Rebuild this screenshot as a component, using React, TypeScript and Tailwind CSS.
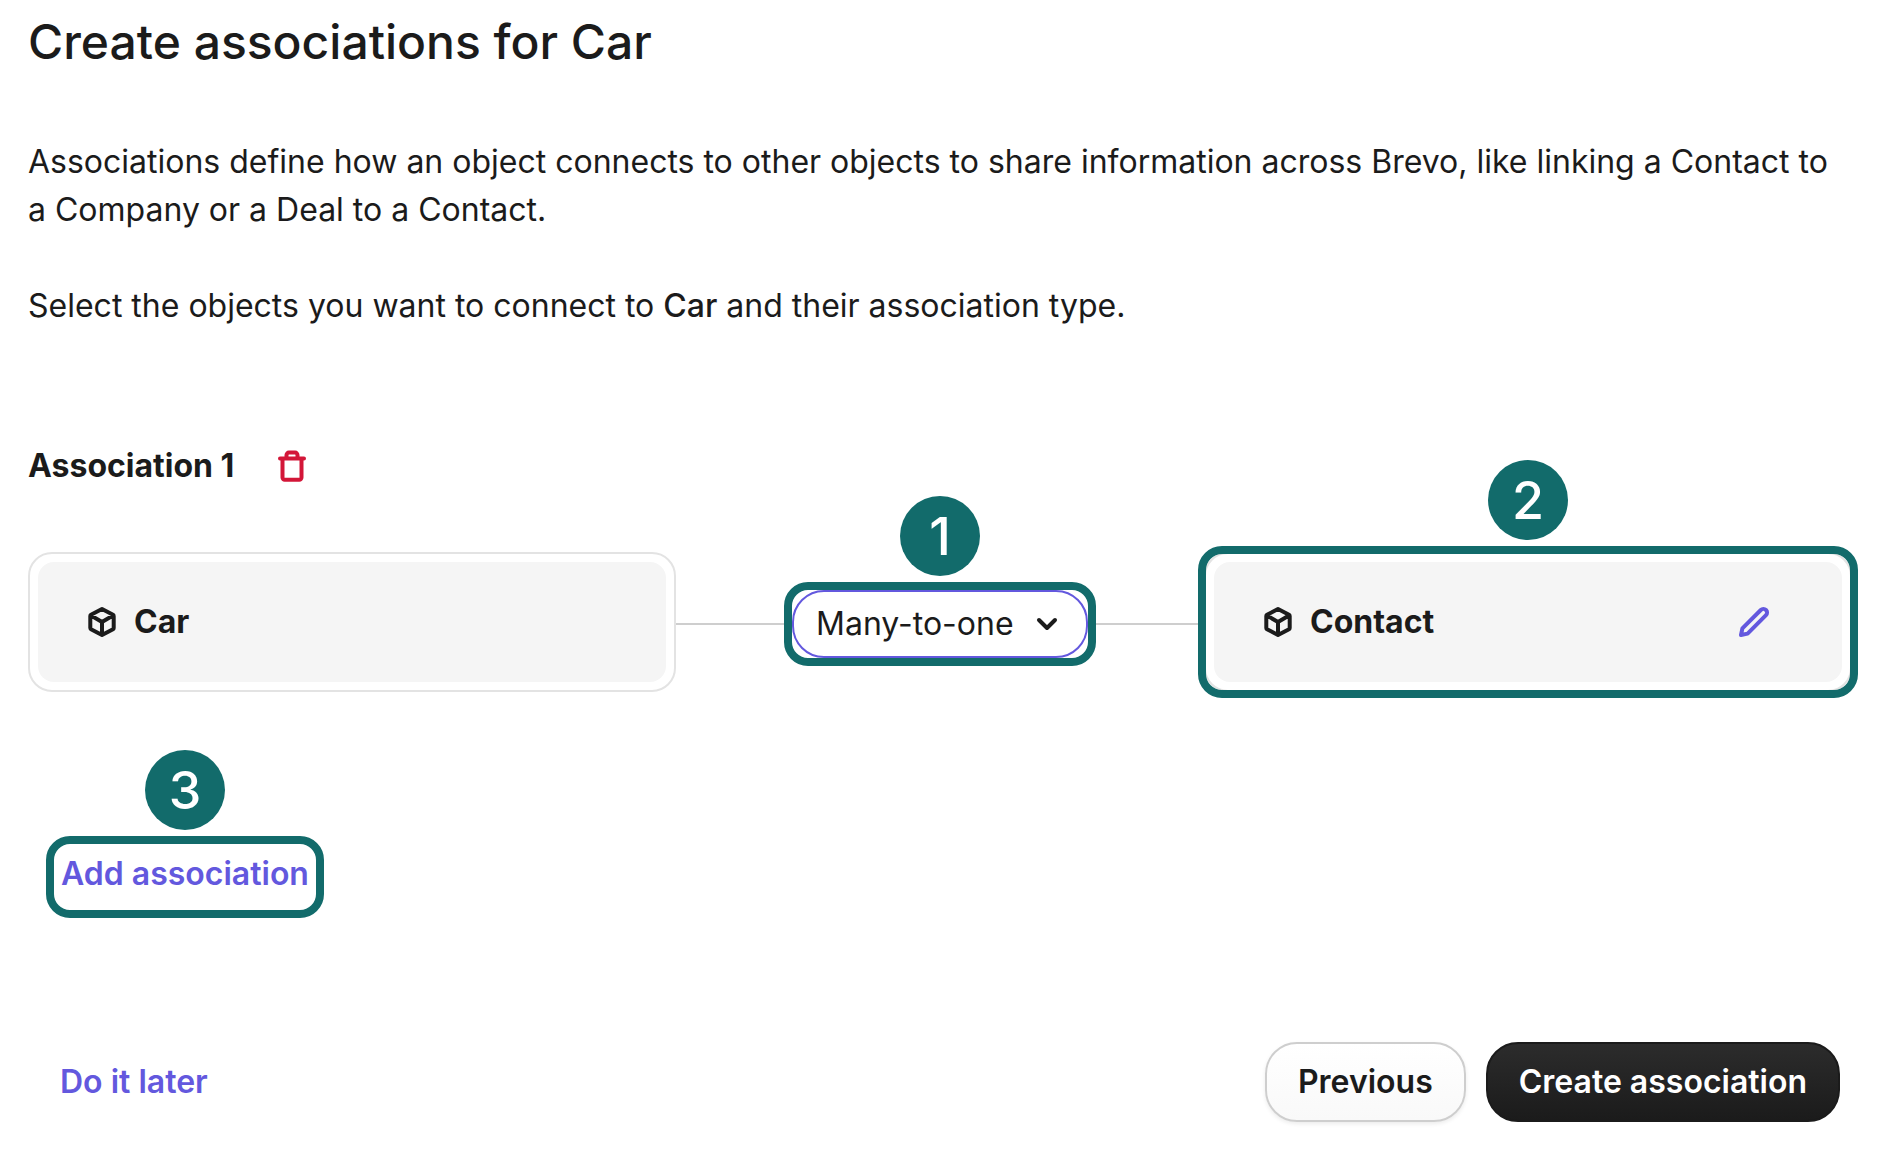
import { useState } from "react";
import type { ReactNode } from "react";

const ASSOCIATION_TYPES = ["One-to-one", "One-to-many", "Many-to-one", "Many-to-many"];

export default function App() {
  const [type, setType] = useState("Many-to-one");

  return (
    <main className="px-7 pt-3.5 pb-7 bg-white text-[#1b1b1b] text-[32px] leading-12 font-['Inter',sans-serif]">
      <h1 className="text-[48px] leading-14 font-medium">Create associations for Car</h1>

      <p className="mt-[68px]">
        Associations define how an object connects to other objects to share information across Brevo, like linking a
        Contact to a Company or a Deal to a Contact.
      </p>
      <p className="mt-12">
        Select the objects you want to connect to <span className="font-medium">Car</span> and their association type.
      </p>

      {/* Association */}
      <section className="mt-28">
        <div className="flex items-center gap-[42px]">
          <h2 className="font-bold">Association 1</h2>
          <button type="button" aria-label="Delete association" className="text-[#d31638]">
            <TrashIcon />
          </button>
        </div>

        <div className="mt-[62px] grid grid-cols-[1fr_528px_1fr]">
          <ObjectCard name="Car" />

          <div className="flex items-center pt-1">
            <Connector />
            <div className="relative h-[84px] border-8 border-[#126b6b] rounded-3xl">
              <StepBadge step={1} />
              <select
                aria-label="Association type"
                value={type}
                onChange={(e) => setType(e.target.value)}
                className="block w-[296px] h-[68px] pl-[22px] appearance-none border-2 border-[#6358de] rounded-[32px] bg-white outline-none"
              >
                {ASSOCIATION_TYPES.map((t) => (
                  <option key={t}>{t}</option>
                ))}
              </select>
              <ChevronIcon />
            </div>
            <Connector />
          </div>

          <div className="relative">
            <ObjectCard name="Contact" editable />
            <div className="absolute -inset-1.5 border-8 border-[#126b6b] rounded-3xl pointer-events-none">
              <StepBadge step={2} />
            </div>
          </div>
        </div>
      </section>

      <div className="mt-36 ml-[18px] relative w-fit h-[82px] px-[7px] border-8 border-[#126b6b] rounded-3xl">
        <StepBadge step={3} />
        <button type="button" className="pt-1.5 font-semibold text-[#6358de]">
          Add association
        </button>
      </div>

      {/* Footer */}
      <footer className="mt-31 pl-8 pr-3 flex items-center justify-between">
        <button type="button" className="font-semibold text-[#6358de]">
          Do it later
        </button>
        <div className="flex gap-5 font-semibold">
          <button
            type="button"
            className="h-20 px-[31px] border-2 border-[#cecece] rounded-[32px] bg-linear-to-b from-white to-[#f9f9f9] shadow-[0_2px_4px_rgba(0,0,0,0.08)]"
          >
            Previous
          </button>
          <button
            type="button"
            className="h-20 px-[31px] border-2 border-[#1b1b1b] rounded-[32px] bg-linear-to-b from-[#2c2c2c] to-[#1b1b1b] text-white"
          >
            Create association
          </button>
        </div>
      </footer>
    </main>
  );
}

function ObjectCard({ name, editable }: { name: string; editable?: boolean }) {
  return (
    <div className="p-2 border-2 border-[#e3e3e3] rounded-3xl">
      <div className="h-30 pl-12 pr-18 flex items-center rounded-2xl bg-[#f5f5f5]">
        <CubeIcon />
        <span className="ml-4 font-bold">{name}</span>
        {editable && (
          <button type="button" aria-label={`Edit ${name}`} className="ml-auto text-[#6358de]">
            <PencilIcon />
          </button>
        )}
      </div>
    </div>
  );
}

function Connector() {
  return <div className="flex-1 h-0.5 bg-[#cecece]" />;
}

// Numbered marker that sits above the framed control
function StepBadge({ step }: { step: number }) {
  return (
    <span className="absolute bottom-full left-1/2 -translate-x-1/2 mb-3.5 size-20 pt-0.5 flex items-center justify-center rounded-full bg-[#126b6b] text-white text-[52px] font-medium">
      {step}
    </span>
  );
}

function Icon({ children }: { children: ReactNode }) {
  return (
    <svg
      viewBox="0 0 32 32"
      className="size-8 overflow-visible"
      fill="none"
      stroke="currentColor"
      strokeWidth="4"
      strokeLinecap="round"
      strokeLinejoin="round"
      aria-hidden="true"
    >
      {children}
    </svg>
  );
}

function TrashIcon() {
  return (
    <Icon>
      <path d="M4 8.5h24M10.500 7V5a2.400 2.400 0 0 1 2.400-2.400h6.200A2.400 2.400 0 0 1 21.500 5v2M6.500 9v18.500a2.200 2.200 0 0 0 2.200 2.200h14.600a2.200 2.200 0 0 0 2.200-2.200V9" />
    </Icon>
  );
}

function CubeIcon() {
  return (
    <Icon>
      <path d="M16 3 27 8.800a1.500 1.500 0 0 1 .7 1.300v11.800a1.500 1.500 0 0 1-.7 1.300L16 29 5 23.200a1.500 1.500 0 0 1-.7-1.300V10.100A1.500 1.500 0 0 1 5 8.800ZM5 9.600l11 6.400 11-6.400M16 16v12.500" />
    </Icon>
  );
}

function PencilIcon() {
  return (
    <Icon>
      <path d="M3 29 4.400 22.400 22.800 4a3.700 3.700 0 0 1 5.200 0 3.700 3.700 0 0 1 0 5.200L9.600 27.600Z" />
    </Icon>
  );
}

function ChevronIcon() {
  return (
    <svg
      viewBox="0 0 20 12"
      className="absolute right-[31px] top-7 w-5 h-3 overflow-visible pointer-events-none"
      fill="none"
      stroke="currentColor"
      strokeWidth="4"
      strokeLinecap="round"
      strokeLinejoin="round"
      aria-hidden="true"
    >
      <path d="m2 2 8 8 8-8" />
    </svg>
  );
}
